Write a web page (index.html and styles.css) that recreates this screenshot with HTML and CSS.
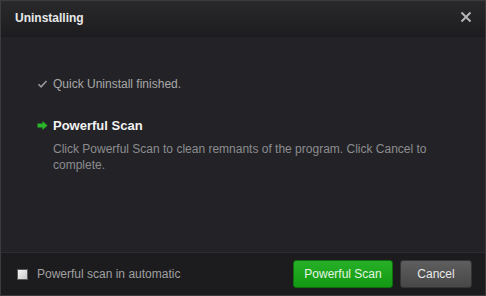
FILE: index.html
```html
<!DOCTYPE html>
<html>
<head>
<meta charset="utf-8">
<link rel="stylesheet" href="styles.css">
</head>
<body>
<div class="dialog">
  <div class="titlebar">
    <span class="title">Uninstalling</span>
    <svg class="close" width="12" height="12" viewBox="0 0 12 12"><path d="M1.5 1.5L10.5 10.5M10.5 1.5L1.5 10.5" stroke="#b4b4b4" stroke-width="2" fill="none"/></svg>
  </div>
  <div class="content">
    <div class="step done">
      <svg class="icon" width="10" height="8" viewBox="0 0 10 8"><path d="M1 4.2L3.6 6.8L9 1" stroke="#9a9a9a" stroke-width="1.6" fill="none"/></svg>
      <span>Quick Uninstall finished.</span>
    </div>
    <div class="step current">
      <svg class="icon" width="10" height="9" viewBox="0 0 10 9"><path d="M0 2.5H5V0L10 4.5L5 9V6.5H0Z" fill="#2bb52b"/></svg>
      <span>Powerful Scan</span>
    </div>
    <p class="desc">Click Powerful Scan to clean remnants of the program. Click Cancel to complete.</p>
  </div>
  <div class="footer">
    <label class="check"><span class="box"></span>Powerful scan in automatic</label>
    <div class="buttons">
      <button class="btn primary">Powerful Scan</button>
      <button class="btn secondary">Cancel</button>
    </div>
  </div>
</div>
</body>
</html>
```
FILE: styles.css
```css
html, body {
  margin: 0;
  padding: 0;
  background: #000;
}
.dialog {
  width: 484px;
  height: 294px;
  border: 1px solid #3c3c3e;
  background: #232327;
  display: flex;
  flex-direction: column;
  font-family: "Liberation Sans", Arial, sans-serif;
  font-size: 12px;
}
.titlebar {
  height: 36px;
  flex: none;
  background: linear-gradient(#29292c, #1d1d20);
  display: flex;
  align-items: center;
  justify-content: space-between;
  padding: 0 13px 0 14px;
  border-bottom: 1px solid #1b1b1e;
  box-sizing: border-box;
}
.title {
  color: #e8e8e8;
  font-weight: bold;
  font-size: 12px;
  padding-bottom: 2px;
}
.close {
  display: block;
  margin-bottom: 3px;
}
.content {
  flex: 1;
  padding: 39px 0 0 31px;
}
.step {
  display: flex;
  align-items: center;
  height: 16px;
}
.step .icon {
  width: 21px;
  flex: none;
}
.step.done {
  color: #a8a8a8;
}
.step.current {
  margin-top: 25px;
  color: #f2f2f2;
  font-weight: bold;
  font-size: 13px;
}
.desc {
  margin: 8px 40px 0 21px;
  color: #8c8c8f;
  line-height: 16px;
}
.footer {
  height: 42px;
  flex: none;
  background: #1c1c1f;
  border-top: 1px solid #2e2e31;
  display: flex;
  align-items: center;
  justify-content: space-between;
  padding: 0 13px 0 16px;
}
.check {
  display: flex;
  align-items: center;
  color: #a0a0a0;
}
.box {
  width: 11px;
  height: 11px;
  background: linear-gradient(135deg, #f4f4f4, #c8c8c8);
  border: 1px solid #5a5a5a;
  margin-right: 9px;
  box-sizing: border-box;
}
.buttons {
  display: flex;
  gap: 7px;
}
.btn {
  height: 28px;
  border-radius: 3px;
  font-family: "Liberation Sans", Arial, sans-serif;
  font-size: 12px;
  padding: 0;
  cursor: pointer;
}
.primary {
  width: 100px;
  background: linear-gradient(#27b027, #139913);
  border: 1px solid #0c6e0c;
  color: #e4f5e4;
}
.secondary {
  width: 72px;
  background: linear-gradient(#5e5e5e, #484848);
  border: 1px solid #333;
  color: #e8e8e8;
}
```
